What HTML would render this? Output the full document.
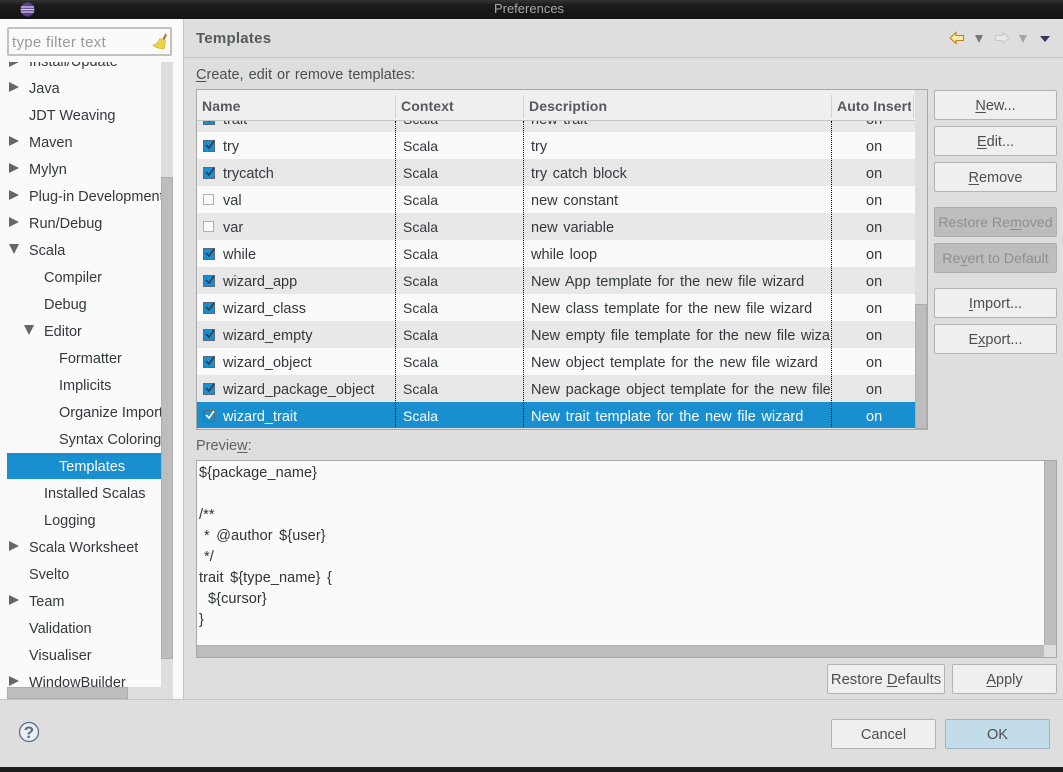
<!DOCTYPE html>
<html><head><meta charset="utf-8"><style>
html,body{margin:0;padding:0;width:1063px;height:772px;overflow:hidden;background:#dedede}
body{position:relative;font:14.5px/27px "Liberation Sans",sans-serif;color:#2e3436}
div,span.a,svg{position:absolute}
.t{white-space:nowrap;position:absolute;height:27px;line-height:27px;color:#33393b;margin-top:1px}
.row{position:absolute;left:0;width:718px;height:27px}
.row .t{top:1px}
.row .c{font-size:14px;margin-top:0}
.row .d{word-spacing:1.6px}
.g{background:#e8e8e8}.w{background:#fafafa}
.cb{position:absolute;left:6px;top:8px;width:12px;height:12px;background:#1a8fd0;border:1px solid #5a6a78;box-sizing:border-box}
.cb svg{left:0;top:-3px}
.ub{position:absolute;left:6px;top:8px;width:11px;height:11px;background:#fafafa;border:1px solid #b0b0b0;box-sizing:border-box}
.btn{position:absolute;box-sizing:border-box;border:1px solid #b3b3b3;border-radius:2px;background:#efefef;text-align:center;height:30px;line-height:31px;color:#4a4f50;white-space:nowrap}
.dis{background:#bdbdbd;color:#8f8f8f;border-color:#aeaeae;font-size:14.2px}
.tri{position:absolute;width:0;height:0;margin-top:.5px;border-top:5.5px solid transparent;border-bottom:5.5px solid transparent;border-left:10px solid #666}
.trd{position:absolute;width:0;height:0;border-left:5px solid transparent;border-right:5px solid transparent;border-top:10px solid #666}
.hd{font-weight:bold;color:#555a5c;font-size:14px;letter-spacing:.1px;margin-top:0}
.dot{position:absolute;top:0;height:308px;width:0;border-left:1px dotted #000}
.sep{position:absolute;top:1px;height:23px;width:1px;background:#d4d4d4}
.m{position:absolute;white-space:pre;font-size:14.5px;word-spacing:2.4px;letter-spacing:.08px;height:21px;line-height:21px;left:2px;color:#2e3436}
u{text-underline-offset:2px}
</style></head><body>
<div style="left:0;top:0;width:1063px;height:19px;background:linear-gradient(#333,#1a1a1a 30%,#141414)"></div>
<div class="t" style="left:0;width:1058px;text-align:center;top:-5px;margin:0;color:#a8a8a8;font-size:13px">Preferences</div>
<svg style="left:20px;top:2px" width="15" height="15" viewBox="0 0 15 15"><circle cx="7.5" cy="7.5" r="7" fill="#5b3f8c"/><path d="M1 5h13M.6 7.5h13.8M1 10h13" stroke="#d8cfe8" stroke-width="1.2"/></svg>

<!-- left panel -->
<div style="left:0;top:19px;width:183px;height:680px;background:#fafafa;border-right:1px solid #c4c4c4"></div>
<div style="left:7px;top:27px;width:165px;height:29px;box-sizing:border-box;border:2px solid #c2c2c2;border-radius:2px;background:#fafafa"></div>
<div class="t" style="left:12px;top:28px;color:#9a9a9a;font-size:15px;letter-spacing:.3px">type filter text</div>
<svg style="left:152px;top:32px" width="16" height="18" viewBox="0 0 16 18"><path d="M10.5 7L13.5 1.5l1.5 1-2.5 5.5z" fill="#a8701f"/><path d="M8 6.5l5.5 2.5C13 12 12.5 15 12 17c-3 0-8-1-11-4 3 0 5-2 7-6.500z" fill="#ecd548" stroke="#c9ac1e" stroke-width=".6"/></svg>

<div style="left:7px;top:62px;width:154px;height:625px;overflow:hidden;background:#fafafa">
<div class="t" style="left:22px;top:-14px">Install/Update</div><div class="tri" style="left:2px;top:-6px"></div>
<div class="tri" style="left:2px;top:19px"></div><div class="t" style="left:22px;top:13px">Java</div>
<div class="t" style="left:22px;top:40px">JDT Weaving</div>
<div class="tri" style="left:2px;top:73px"></div><div class="t" style="left:22px;top:67px">Maven</div>
<div class="tri" style="left:2px;top:100px"></div><div class="t" style="left:22px;top:94px">Mylyn</div>
<div class="tri" style="left:2px;top:127px"></div><div class="t" style="left:22px;top:121px">Plug-in Development</div>
<div class="tri" style="left:2px;top:154px"></div><div class="t" style="left:22px;top:148px">Run/Debug</div>
<div class="trd" style="left:2px;top:182px"></div><div class="t" style="left:22px;top:175px">Scala</div>
<div class="t" style="left:37px;top:202px">Compiler</div>
<div class="t" style="left:37px;top:229px">Debug</div>
<div class="trd" style="left:17px;top:263px"></div><div class="t" style="left:37px;top:256px">Editor</div>
<div class="t" style="left:52px;top:283px">Formatter</div>
<div class="t" style="left:52px;top:310px">Implicits</div>
<div class="t" style="left:52px;top:337px">Organize Imports</div>
<div class="t" style="left:52px;top:364px">Syntax Coloring</div>
<div style="left:0;top:391px;width:154px;height:26px;background:#1a8fd0"></div>
<div class="t" style="left:52px;top:391px;color:#fff">Templates</div>
<div class="t" style="left:37px;top:418px">Installed Scalas</div>
<div class="t" style="left:37px;top:445px">Logging</div>
<div class="tri" style="left:2px;top:478px"></div><div class="t" style="left:22px;top:472px">Scala Worksheet</div>
<div class="t" style="left:22px;top:499px">Svelto</div>
<div class="tri" style="left:2px;top:532px"></div><div class="t" style="left:22px;top:526px">Team</div>
<div class="t" style="left:22px;top:553px">Validation</div>
<div class="t" style="left:22px;top:580px">Visualiser</div>
<div class="tri" style="left:2px;top:613px"></div><div class="t" style="left:22px;top:607px">WindowBuilder</div>
</div>
<div style="left:161px;top:62px;width:12px;height:637px;background:#dedede"></div>
<div style="left:161px;top:177px;width:12px;height:482px;box-sizing:border-box;background:#bdbdbd;border:1px solid #aeaeae"></div>
<div style="left:7px;top:687px;width:154px;height:12px;background:#dedede"></div>
<div style="left:7px;top:687px;width:121px;height:12px;box-sizing:border-box;background:#bdbdbd;border:1px solid #aeaeae"></div>

<!-- right header -->
<div class="t" style="left:196px;top:25px;margin:0;font-weight:bold;font-size:15px;letter-spacing:.25px;color:#555a5c">Templates</div>
<div style="left:184px;top:57px;width:879px;height:1px;background:#c4c4c4"></div>
<svg style="left:949px;top:30px" width="16" height="16" viewBox="0 0 16 16"><path d="M1 8L7 2.500V5.500H14.500V10.500H7V13.500z" fill="#fde9a8" stroke="#c0801a" stroke-width="1.100"/></svg>
<div style="left:975px;top:35px;width:0;height:0;border-left:4px solid transparent;border-right:4px solid transparent;border-top:8px solid #777"></div>
<svg style="left:994px;top:30px" width="16" height="16" viewBox="0 0 16 16"><path d="M15 8L9 2.500V5.500H1.500V10.500H9V13.500z" fill="#e8e8e8" stroke="#c8c8c8" stroke-width="1.100"/></svg>
<div style="left:1019px;top:35px;width:0;height:0;border-left:4px solid transparent;border-right:4px solid transparent;border-top:8px solid #a5a5a5"></div>
<div style="left:1040px;top:36px;width:0;height:0;border-left:5px solid transparent;border-right:5px solid transparent;border-top:6px solid #3a3560"></div>
<div class="t" style="left:196px;top:61px;color:#4a4f50;word-spacing:1px"><u>C</u>reate, edit or remove templates:</div>

<!-- table -->
<div style="left:196px;top:89px;width:732px;height:341px;box-sizing:border-box;border:1px solid #a8a8a8;background:#dedede"></div>
<div style="left:197px;top:90px;width:718px;height:338px;overflow:hidden;background:#fafafa">
<div style="left:0;top:0;width:718px;height:30px;background:#efefef;border-bottom:1px solid #c6c6c6;z-index:3;">
<div class="t hd" style="left:5px;top:3px">Name</div><div class="sep" style="left:198px;top:5px"></div>
<div class="t hd" style="left:204px;top:3px">Context</div><div class="sep" style="left:326px;top:5px"></div>
<div class="t hd" style="left:332px;top:3px">Description</div><div class="sep" style="left:634px;top:5px"></div>
<div class="t hd" style="left:640px;top:3px;width:74px;overflow:hidden">Auto Insert</div><div class="sep" style="left:716px;top:5px"></div>
</div>
<div style="left:0;top:15px;width:718px;height:324px">
<div class="row g" style="top:0"><div class="cb"><svg width="12" height="14" viewBox="0 0 12 14"><path d="M2 7l3 3 5-7" fill="none" stroke="#2c3e50" stroke-width="1.600"/></svg></div><div class="t" style="left:26px">trait</div><div class="t c" style="left:206px">Scala</div><div class="t d" style="left:334px">new trait</div><div class="t" style="left:669px">on</div></div>
<div class="row w" style="top:27px"><div class="cb"><svg width="12" height="14" viewBox="0 0 12 14"><path d="M2 7l3 3 5-7" fill="none" stroke="#2c3e50" stroke-width="1.600"/></svg></div><div class="t" style="left:26px">try</div><div class="t c" style="left:206px">Scala</div><div class="t d" style="left:334px">try</div><div class="t" style="left:669px">on</div></div>
<div class="row g" style="top:54px"><div class="cb"><svg width="12" height="14" viewBox="0 0 12 14"><path d="M2 7l3 3 5-7" fill="none" stroke="#2c3e50" stroke-width="1.600"/></svg></div><div class="t" style="left:26px">trycatch</div><div class="t c" style="left:206px">Scala</div><div class="t d" style="left:334px">try catch block</div><div class="t" style="left:669px">on</div></div>
<div class="row w" style="top:81px"><div class="ub"></div><div class="t" style="left:26px">val</div><div class="t c" style="left:206px">Scala</div><div class="t d" style="left:334px">new constant</div><div class="t" style="left:669px">on</div></div>
<div class="row g" style="top:108px"><div class="ub"></div><div class="t" style="left:26px">var</div><div class="t c" style="left:206px">Scala</div><div class="t d" style="left:334px">new variable</div><div class="t" style="left:669px">on</div></div>
<div class="row w" style="top:135px"><div class="cb"><svg width="12" height="14" viewBox="0 0 12 14"><path d="M2 7l3 3 5-7" fill="none" stroke="#2c3e50" stroke-width="1.600"/></svg></div><div class="t" style="left:26px">while</div><div class="t c" style="left:206px">Scala</div><div class="t d" style="left:334px">while loop</div><div class="t" style="left:669px">on</div></div>
<div class="row g" style="top:162px"><div class="cb"><svg width="12" height="14" viewBox="0 0 12 14"><path d="M2 7l3 3 5-7" fill="none" stroke="#2c3e50" stroke-width="1.600"/></svg></div><div class="t" style="left:26px">wizard_app</div><div class="t c" style="left:206px">Scala</div><div class="t d" style="left:334px">New App template for the new file wizard</div><div class="t" style="left:669px">on</div></div>
<div class="row w" style="top:189px"><div class="cb"><svg width="12" height="14" viewBox="0 0 12 14"><path d="M2 7l3 3 5-7" fill="none" stroke="#2c3e50" stroke-width="1.600"/></svg></div><div class="t" style="left:26px">wizard_class</div><div class="t c" style="left:206px">Scala</div><div class="t d" style="left:334px">New class template for the new file wizard</div><div class="t" style="left:669px">on</div></div>
<div class="row g" style="top:216px"><div class="cb"><svg width="12" height="14" viewBox="0 0 12 14"><path d="M2 7l3 3 5-7" fill="none" stroke="#2c3e50" stroke-width="1.600"/></svg></div><div class="t" style="left:26px">wizard_empty</div><div class="t c" style="left:206px">Scala</div><div class="t d" style="left:334px;width:299px;overflow:hidden">New empty file template for the new file wizard</div><div class="t" style="left:669px">on</div></div>
<div class="row w" style="top:243px"><div class="cb"><svg width="12" height="14" viewBox="0 0 12 14"><path d="M2 7l3 3 5-7" fill="none" stroke="#2c3e50" stroke-width="1.600"/></svg></div><div class="t" style="left:26px">wizard_object</div><div class="t c" style="left:206px">Scala</div><div class="t d" style="left:334px">New object template for the new file wizard</div><div class="t" style="left:669px">on</div></div>
<div class="row g" style="top:270px"><div class="cb"><svg width="12" height="14" viewBox="0 0 12 14"><path d="M2 7l3 3 5-7" fill="none" stroke="#2c3e50" stroke-width="1.600"/></svg></div><div class="t" style="left:26px">wizard_package_object</div><div class="t c" style="left:206px">Scala</div><div class="t d" style="left:334px;width:299px;overflow:hidden">New package object template for the new file wizard</div><div class="t" style="left:669px">on</div></div>
<div class="row" style="top:297px;background:#1a8fd0"><div class="cb" style="background:#1a8fd0"><svg width="12" height="14" viewBox="0 0 12 14"><path d="M2 7l3 3 5-7" fill="none" stroke="#fff" stroke-width="1.600"/></svg></div><div class="t" style="left:26px;color:#fff">wizard_trait</div><div class="t c" style="left:206px;color:#fff">Scala</div><div class="t d" style="left:334px;color:#fff">New trait template for the new file wizard</div><div class="t" style="left:669px;color:#fff">on</div></div>
</div>
<div class="dot" style="left:198px;top:31px"></div><div class="dot" style="left:326px;top:31px"></div><div class="dot" style="left:634px;top:31px"></div>
</div>
<div style="left:915px;top:304px;width:12px;height:125px;box-sizing:border-box;background:#bdbdbd;border:1px solid #aeaeae"></div>

<!-- buttons -->
<div class="btn" style="left:934px;top:90px;width:123px"><u>N</u>ew...</div>
<div class="btn" style="left:934px;top:126px;width:123px"><u>E</u>dit...</div>
<div class="btn" style="left:934px;top:162px;width:123px"><u>R</u>emove</div>
<div class="btn dis" style="left:934px;top:207px;width:123px">Restore Re<u>m</u>oved</div>
<div class="btn dis" style="left:934px;top:243px;width:123px">Re<u>v</u>ert to Default</div>
<div class="btn" style="left:934px;top:288px;width:123px"><u>I</u>mport...</div>
<div class="btn" style="left:934px;top:324px;width:123px">E<u>x</u>port...</div>

<!-- preview -->
<div class="t" style="left:196px;top:432px;color:#5c6162">Previe<u>w</u>:</div>
<div style="left:196px;top:460px;width:861px;height:198px;box-sizing:border-box;border:1px solid #a8a8a8;background:#fafafa">
<div class="m" style="top:2px">${package_name}</div>
<div class="m" style="top:44px">/**</div>
<div class="m" style="top:65px;left:7px">* @author ${user}</div>
<div class="m" style="top:86px;left:7px">*/</div>
<div class="m" style="top:107px">trait ${type_name} {</div>
<div class="m" style="top:128px;left:11px">${cursor}</div>
<div class="m" style="top:149px">}</div>
<div style="right:0;top:0;width:12px;height:184px;background:#bdbdbd;border-left:1px solid #aeaeae;box-sizing:border-box"></div>
<div style="left:0;bottom:0;width:847px;height:12px;background:#bdbdbd;border-top:1px solid #aeaeae;box-sizing:border-box"></div>
<div style="right:0;bottom:0;width:12px;height:12px;background:#dedede"></div>
</div>
<div class="btn" style="left:827px;top:664px;width:118px;font-size:14.8px">Restore <u>D</u>efaults</div>
<div class="btn" style="left:952px;top:664px;width:105px"><u>A</u>pply</div>

<!-- footer -->
<div style="left:0;top:699px;width:1063px;height:1px;background:#c4c4c4"></div>
<svg style="left:18px;top:721px" width="22" height="22" viewBox="0 0 22 22"><circle cx="11" cy="11" r="9.500" fill="#eceef2" stroke="#5a6b8c" stroke-width="1.300"/><text x="11" y="17" text-anchor="middle" font-family="Liberation Sans" font-weight="bold" font-size="17" fill="#5a6b8c">?</text></svg>
<div class="btn" style="left:831px;top:719px;width:105px">Cancel</div>
<div class="btn" style="left:945px;top:719px;width:105px;background:#c3dcea;border-color:#9fb4c2">OK</div>
<div style="left:0;top:767px;width:1063px;height:5px;background:#1c1c1c"></div>
</body></html>
